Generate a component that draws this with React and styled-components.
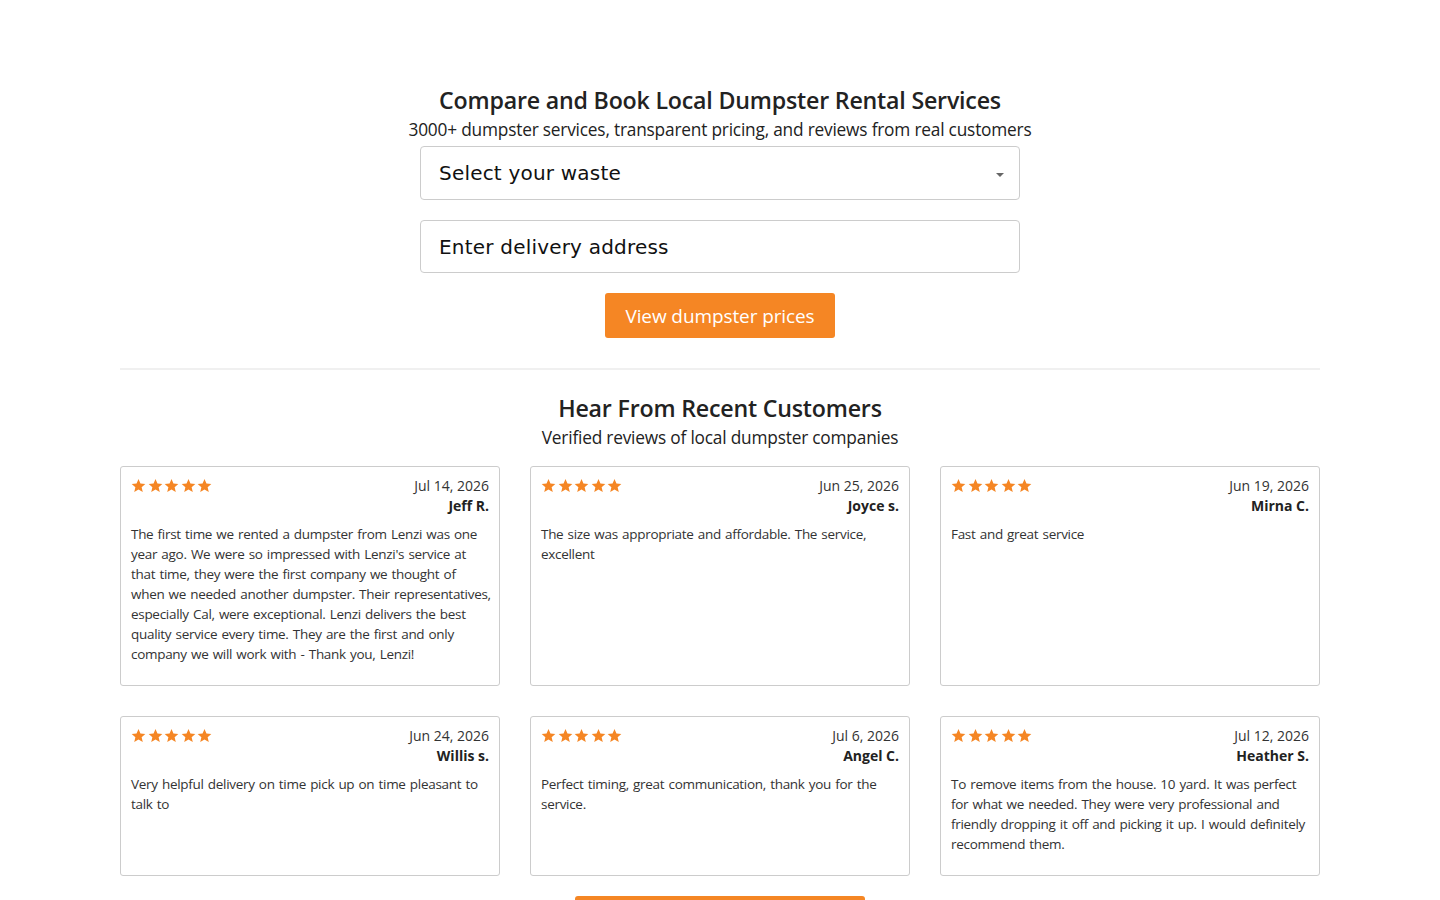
import React from "react";
import styled, { createGlobalStyle } from "styled-components";

const Global = createGlobalStyle`
  html, body { margin: 0; padding: 0; background: #fff; }
  body { font-family: "Open Sans", "Noto Sans", sans-serif; color: #222; }
  * { box-sizing: border-box; }
`;

const Page = styled.div`
  width: 1200px;
  margin: 0 auto;
  padding-top: 84px;
  display: flex;
  flex-direction: column;
  align-items: center;
`;

const Title = styled.h1`
  margin: 0;
  font-size: 23.2px;
  font-weight: 600;
  line-height: 32px;
  color: #222;
  letter-spacing: -0.2px;
`;

const Subtitle = styled.p`
  margin: 0;
  font-size: 17.3px;
  line-height: 28px;
  color: #222;
  letter-spacing: -0.2px;
`;

const Form = styled.form`
  width: 600px;
  display: flex;
  flex-direction: column;
  align-items: center;
  gap: 20px;
  margin-top: 2px;
`;

const FieldBox = styled.div`
  position: relative;
  width: 100%;
  height: ${(p) => p.$h}px;
  border: 1px solid #ccc;
  border-radius: 4px;
  display: flex;
  align-items: center;
  padding: 0 18px;
  font-family: "DejaVu Sans", sans-serif;
  font-size: 20px;
  color: #111;
  letter-spacing: 0.2px;
`;

const Caret = styled.span`
  position: absolute;
  right: 15px;
  top: 50%;
  width: 0;
  height: 0;
  border-left: 4px solid transparent;
  border-right: 4px solid transparent;
  border-top: 4px solid #666;
`;

const OrangeButton = styled.button`
  width: ${(p) => p.$w}px;
  height: ${(p) => p.$h}px;
  background: #f58624;
  border: none;
  border-radius: 3px;
  color: #fff;
  font-family: "Open Sans", sans-serif;
  font-size: 19px;
  letter-spacing: -0.1px;
  cursor: pointer;
`;

const Divider = styled.hr`
  width: 100%;
  border: none;
  border-top: 2px solid #f0f0f0;
  margin: 30px 0 0;
`;

const Section = styled.section`
  width: 100%;
  display: flex;
  flex-direction: column;
  align-items: center;
  padding-top: 22px;
`;

const Grid = styled.div`
  width: 100%;
  display: grid;
  grid-template-columns: repeat(3, 1fr);
  gap: 30px;
  margin-top: 14px;
`;

const Card = styled.div`
  border: 1px solid #ccc;
  border-radius: 3px;
  padding: 9px 10px 21px;
  display: flex;
  flex-direction: column;
`;

const CardHead = styled.div`
  display: flex;
  justify-content: space-between;
  align-items: flex-start;
`;

const Stars = styled.div`
  display: flex;
  gap: 1.5px;
  padding-top: 2px;
`;

const Meta = styled.div`
  display: flex;
  flex-direction: column;
  align-items: flex-end;
  font-size: 14px;
  line-height: 20px;
  color: #333;
`;

const Name = styled.span`
  font-weight: 700;
  color: #222;
`;

const Body = styled.p`
  margin: 8px -3px 0 0;
  font-size: 13.5px;
  line-height: 20px;
  color: #333;
  letter-spacing: -0.3px;
  word-spacing: 1px;
`;

const BottomWrap = styled.div`
  margin-top: 20px;
  display: flex;
  justify-content: center;
`;

const Star = () => (
  <svg width="15" height="15" viewBox="0 0 24 24">
    <path
      fill="#f58624"
      d="M12 1.5l3.1 7.2 7.8.7-5.9 5.2 1.8 7.7L12 18.3l-6.8 4 1.8-7.7-5.9-5.2 7.8-.7z"
    />
  </svg>
);

const reviews = [
  {
    date: "Jul 14, 2026",
    name: "Jeff R.",
    text: "The first time we rented a dumpster from Lenzi was one year ago. We were so impressed with Lenzi's service at that time, they were the first company we thought of when we needed another dumpster. Their representatives, especially Cal, were exceptional. Lenzi delivers the best quality service every time. They are the first and only company we will work with - Thank you, Lenzi!",
  },
  {
    date: "Jun 25, 2026",
    name: "Joyce s.",
    text: "The size was appropriate and affordable. The service, excellent",
  },
  { date: "Jun 19, 2026", name: "Mirna C.", text: "Fast and great service" },
  {
    date: "Jun 24, 2026",
    name: "Willis s.",
    text: "Very helpful delivery on time pick up on time pleasant to talk to",
  },
  {
    date: "Jul 6, 2026",
    name: "Angel C.",
    text: "Perfect timing, great communication, thank you for the service.",
  },
  {
    date: "Jul 12, 2026",
    name: "Heather S.",
    text: "To remove items from the house. 10 yard. It was perfect for what we needed. They were very professional and friendly dropping it off and picking it up. I would definitely recommend them.",
  },
];

export default function App() {
  return (
    <>
      <Global />
      <Page>
        <Title>Compare and Book Local Dumpster Rental Services</Title>
        <Subtitle>3000+ dumpster services, transparent pricing, and reviews from real customers</Subtitle>
        <Form onSubmit={(e) => e.preventDefault()}>
          <FieldBox $h={54}>
            Select your waste
            <Caret />
          </FieldBox>
          <FieldBox $h={53}>Enter delivery address</FieldBox>
          <OrangeButton $w={230} $h={45} type="submit">
            View dumpster prices
          </OrangeButton>
        </Form>
        <Divider />
        <Section>
          <Title>Hear From Recent Customers</Title>
          <Subtitle>Verified reviews of local dumpster companies</Subtitle>
          <Grid>
            {reviews.map((r) => (
              <Card key={r.name}>
                <CardHead>
                  <Stars>
                    {[0, 1, 2, 3, 4].map((i) => (
                      <Star key={i} />
                    ))}
                  </Stars>
                  <Meta>
                    <span>{r.date}</span>
                    <Name>{r.name}</Name>
                  </Meta>
                </CardHead>
                <Body>{r.text}</Body>
              </Card>
            ))}
          </Grid>
          <BottomWrap>
            <OrangeButton $w={290} $h={45}>See more reviews</OrangeButton>
          </BottomWrap>
        </Section>
      </Page>
    </>
  );
}
